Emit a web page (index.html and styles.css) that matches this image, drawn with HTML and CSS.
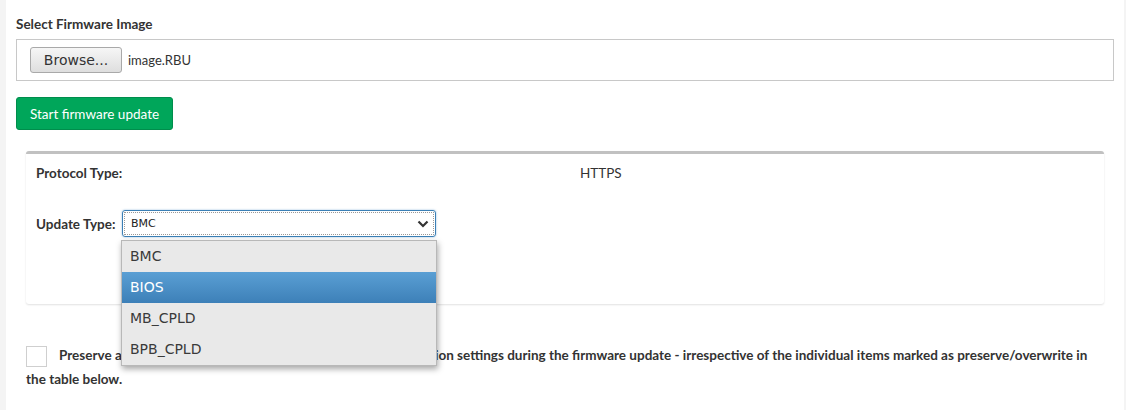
FILE: index.html
```html
<!DOCTYPE html>
<html>
<head>
<meta charset="utf-8">
<link rel="stylesheet" href="styles.css">
</head>
<body>
<div class="page">
  <div class="content">
    <div class="field-label">Select Firmware Image</div>
    <div class="filebox">
      <span class="browse">Browse...</span>
      <span class="filename">image.RBU</span>
    </div>
    <button class="btn-success">Start firmware update</button>
    <div class="panel">
      <div class="row">
        <div class="col-label">Protocol Type:</div>
        <div class="col-value">HTTPS</div>
      </div>
      <div class="row-select">
        <span class="col-label select-label">Update Type:</span>
        <div class="select-wrap">
          <div class="select">
            <span>BMC</span>
            <svg class="chev" width="12" height="8" viewBox="0 0 12 8"><polyline points="1.5,1.5 6,6 10.5,1.5" fill="none" stroke="#333" stroke-width="2.2"/></svg>
          </div>
          <ul class="dropdown">
            <li>BMC</li>
            <li class="active">BIOS</li>
            <li>MB_CPLD</li>
            <li>BPB_CPLD</li>
          </ul>
        </div>
      </div>
    </div>
    <p class="preserve"><span class="checkbox"></span>Preserve a<span class="fit">ll BMC network, user, service and all other</span> configuration settings during the firmware update - irrespective of the individual items marked as preserve/overwrite in the table below.</p>
  </div>
</div>
</body>
</html>
```
FILE: styles.css
```css
html, body {
  margin: 0;
  padding: 0;
}
body {
  background: #f4f4f4;
  font-family: Lato, "Source Sans Pro", sans-serif;
  font-size: 13.5px;
  color: #333;
}
.page {
  margin: 0 2px 0 6px;
  background: #fff;
  min-height: 410px;
}
.content {
  padding: 14px 10px 0 10px;
}
.field-label {
  font-weight: bold;
  line-height: 20px;
  margin-bottom: 5px;
}
.filebox {
  border: 1px solid #c8c8c8;
  height: 40px;
  display: flex;
  align-items: center;
  padding: 0 13px;
}
.browse {
  display: inline-block;
  box-sizing: border-box;
  height: 26px;
  width: 92px;
  line-height: 24px;
  text-align: center;
  border: 1px solid #a9a9a9;
  border-radius: 3px;
  background: linear-gradient(#f6f6f6, #dedede);
  font-family: "DejaVu Sans", sans-serif;
  font-size: 14px;
  color: #333;
}
.filename {
  margin-left: 6px;
  font-size: 13px;
}
.btn-success {
  display: block;
  margin-top: 16px;
  height: 33px;
  width: 157px;
  padding: 0;
  background: #00a65a;
  border: 1px solid #008d4c;
  border-radius: 3px;
  color: #fff;
  font-family: inherit;
  font-size: 13.5px;
}
.panel {
  margin: 21px 10px 0 10px;
  border-top: 3px solid #c1c1c1;
  border-radius: 3px;
  box-shadow: 0 1px 2px rgba(0,0,0,0.12);
  padding: 9px 10px 67px 10px;
  background: #fff;
}
.row {
  display: grid;
  grid-template-columns: 544px 1fr;
  line-height: 20px;
}
.col-label {
  font-weight: bold;
}
.row-select {
  display: flex;
  align-items: center;
  margin-top: 27px;
}
.select-label {
  flex: 0 0 86px;
}
.select-wrap {
  position: relative;
}
.select {
  box-sizing: border-box;
  width: 314px;
  height: 27px;
  border: 1px solid #3b7fb5;
  border-radius: 3px;
  box-shadow: 0 0 2px rgba(60,130,190,0.6);
  outline: 1px dotted #999;
  outline-offset: -3px;
  display: flex;
  align-items: center;
  justify-content: space-between;
  padding: 0 6px 0 8px;
  font-family: "DejaVu Sans", sans-serif;
  font-size: 11px;
  color: #222;
}
.chev {
  display: block;
}
.dropdown {
  position: absolute;
  top: 30px;
  left: -1px;
  width: 316px;
  margin: 0;
  padding: 0;
  list-style: none;
  background: #e9e9e9;
  border: 1px solid #b8b8b8;
  box-sizing: border-box;
  box-shadow: 1px 3px 6px rgba(0,0,0,0.35);
  font-family: "DejaVu Sans", sans-serif;
  font-size: 14px;
  color: #3a3a3a;
  z-index: 5;
}
.dropdown li {
  height: 31px;
  line-height: 31px;
  padding-left: 8px;
}
.dropdown li.active {
  background: linear-gradient(#5a9fd4, #3d80b8);
  color: #fff;
}
.preserve {
  margin: 39px 10px 0 10px;
  font-weight: bold;
  line-height: 24px;
}
.fit {
  letter-spacing: -0.1px;
}
.checkbox {
  float: left;
  width: 21px;
  height: 21px;
  box-sizing: border-box;
  border: 1px solid #cfcfcf;
  margin: 3px 12px 0 0;
}
```
